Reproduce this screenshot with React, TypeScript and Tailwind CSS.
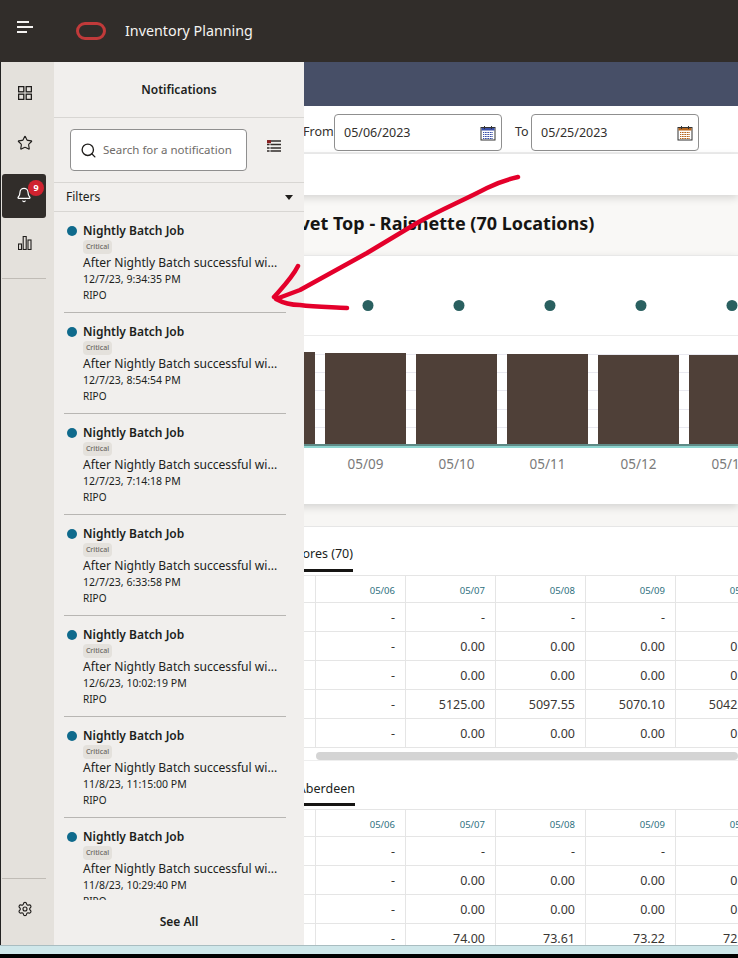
import { Search, Star, Bell, Settings } from "lucide-react";

const FONT = "[font-family:'Noto_Sans','Open_Sans',sans-serif]";

const NOTIFICATIONS = [
  "12/7/23, 9:34:35 PM",
  "12/7/23, 8:54:54 PM",
  "12/7/23, 7:14:18 PM",
  "12/7/23, 6:33:58 PM",
  "12/6/23, 10:02:19 PM",
  "11/8/23, 11:15:00 PM",
  "11/8/23, 10:29:40 PM",
];

const DATES = ["05/06", "05/07", "05/08", "05/09", "05/10", "05/11"];

const STORE_ROWS = [
  ["-", "-", "-", "-", "-", "-"],
  ["-", "0.00", "0.00", "0.00", "0.00", "0.00"],
  ["-", "0.00", "0.00", "0.00", "0.00", "0.00"],
  ["-", "5125.00", "5097.55", "5070.10", "5042.65", "5015.20"],
  ["-", "0.00", "0.00", "0.00", "0.00", "0.00"],
];

const ABERDEEN_ROWS = [
  ["-", "-", "-", "-", "-", "-"],
  ["-", "0.00", "0.00", "0.00", "0.00", "0.00"],
  ["-", "0.00", "0.00", "0.00", "0.00", "0.00"],
  ["-", "74.00", "73.61", "73.22", "72.83", "72.44"],
  ["-", "0.00", "0.00", "0.00", "0.00", "0.00"],
];

const BARS = [
  { x: -2, top: 96 },
  { x: 89, top: 96 },
  { x: 180, top: 97 },
  { x: 271, top: 98 },
  { x: 362, top: 98 },
  { x: 453, top: 99 },
  { x: 544, top: 99 },
  { x: 635, top: 99 },
];

function CalendarIcon({ color, fill }: { color: string; fill: string }) {
  return (
    <svg width="16" height="16" viewBox="0 0 16 16" className="shrink-0">
      <rect x="1" y="2.5" width="14" height="12.5" fill="#fff" stroke="#333" strokeWidth="1" />
      <rect x="1.5" y="3" width="13" height="2.5" fill={color} />
      <path d="M4.5 1v3M11.5 1v3" stroke="#333" strokeWidth="1" />
      <path d="M3 7.5h10M3 9.5h10M3 11.5h10M3 13.5h10" stroke={fill} strokeWidth="1" />
      <path d="M4.5 7v7M7 7v7M9.5 7v7M12 7v7" stroke="#fff" strokeWidth="0.7" />
    </svg>
  );
}

function DateField({ value, color, fill }: { value: string; color: string; fill: string }) {
  return (
    <div className="flex h-[37px] w-[168px] items-center justify-between rounded border border-[#8f8f8f] bg-white pl-[9px] pr-[5px] text-[12.5px] text-[#33302d]">
      <span className="mt-px">{value}</span>
      <CalendarIcon color={color} fill={fill} />
    </div>
  );
}

function DataTable({ rows }: { rows: string[][] }) {
  return (
    <div className="w-[800px] border-t border-[#e5e5e5]">
      <div className="flex h-[27px] border-b border-[#e5e5e5]">
        <div className="w-[262px] shrink-0 border-r border-[#e5e5e5]" />
        {DATES.map((d) => (
          <div
            key={d}
            className="flex w-[90px] shrink-0 items-center justify-end border-r border-[#e5e5e5] pr-[10px] pt-1 text-[9.5px] text-[#2e7080]"
          >
            {d}
          </div>
        ))}
      </div>
      {rows.map((row, i) => (
        <div key={i} className="flex h-[29px] border-b border-[#e5e5e5]">
          <div className="w-[262px] shrink-0 border-r border-[#e5e5e5]" />
          {row.map((v, j) => (
            <div
              key={j}
              className="flex w-[90px] shrink-0 items-center justify-end border-r border-[#e5e5e5] pr-[10px] pt-[2px] text-[12.5px] text-[#3a3734]"
            >
              {v}
            </div>
          ))}
        </div>
      ))}
    </div>
  );
}

function NotificationItem({ date }: { date: string }) {
  return (
    <div className="ml-[10px] mr-[18px] h-[101px] shrink-0 border-b border-[#b8b6b3] pt-[11px] text-[#201e1c]">
      <div className="flex h-[16px] items-center">
        <span className="ml-[3px] h-[10px] w-[10px] rounded-full bg-[#0f6a8c]" />
        <span className="ml-[6px] text-[12px] font-semibold leading-4">Nightly Batch Job</span>
      </div>
      <div className="ml-[19px] mt-px flex h-[14px] w-[29px] items-center justify-center rounded-sm bg-[#e4e1dc] text-[7px] font-medium text-[#6a6763]">
        Critical
      </div>
      <div className="ml-[19px] mt-px h-4 whitespace-nowrap text-[12.1px] leading-4">
        After Nightly Batch successful wi...
      </div>
      <div className="ml-[19px] h-4 text-[10.5px] leading-4">{date}</div>
      <div className="ml-[19px] h-4 text-[10px] leading-4">RIPO</div>
    </div>
  );
}

export default function App() {
  return (
    <div className={`relative flex h-[958px] w-[738px] flex-col overflow-hidden bg-black ${FONT}`}>
      {/* Top bar */}
      <header className="flex h-[62px] shrink-0 items-center bg-[#312d2a] text-white">
        <svg width="16" height="12" viewBox="0 0 16 12" className="ml-[17px] -mt-[8px]">
          <path d="M0 1h12M0 6h16M0 11h10" stroke="#f4f2f0" strokeWidth="1.8" />
        </svg>
        <svg width="30" height="18" viewBox="0 0 30 18" className="ml-[43px]">
          <rect x="1.5" y="1.5" width="27" height="15" rx="7.5" fill="none" stroke="#c13a3a" strokeWidth="3" />
        </svg>
        <span className="ml-[19px] text-[14.3px] text-[#f5f4f2]">Inventory Planning</span>
      </header>

      <div className="relative flex h-[883px] shrink-0">
        {/* Icon rail */}
        <nav className="flex w-[54px] shrink-0 flex-col border-l border-[#222] bg-[#e4e1dc] text-[#201e1c]">
          <div className="flex h-[62px] items-center justify-center pr-[6px]">
            <svg width="14" height="14" viewBox="0 0 14 14" fill="none" stroke="#201e1c" strokeWidth="1.3">
              <rect x="0.6" y="0.6" width="5.2" height="5.2" />
              <rect x="8.2" y="0.6" width="5.2" height="5.2" />
              <rect x="0.6" y="8.2" width="5.2" height="5.2" />
              <rect x="8.2" y="8.2" width="5.2" height="5.2" />
            </svg>
          </div>
          <div className="-mt-[6px] flex h-[50px] items-center justify-center pr-[6px]">
            <Star size={16} strokeWidth={1.7} />
          </div>
          <div className="relative mx-px mt-[6px] flex h-[44px] w-[44px] items-center justify-center rounded-[3px] bg-[#312d2a] text-white">
            <Bell size={16} strokeWidth={1.8} className="-mt-[3px]" />
            <span className="absolute left-[26px] top-[6px] flex h-[16px] w-[16px] items-center justify-center rounded-full bg-[#d0222f] text-[9px] font-bold text-white">
              9
            </span>
          </div>
          <div className="flex h-[50px] items-center justify-center pr-[6px]">
            <svg width="14" height="14" viewBox="0 0 14 14" fill="none" stroke="#201e1c" strokeWidth="1.1">
              <rect x="0.5" y="8" width="3" height="5.5" />
              <rect x="5.2" y="0.5" width="3" height="13" />
              <rect x="10" y="4" width="3" height="9.5" />
            </svg>
          </div>
          <div className="mx-px mt-[10px] w-[44px] border-t border-[#c0bcb6]" />
          <div className="flex-1" />
          <div className="mx-px w-[44px] border-t border-[#c0bcb6]" />
          <div className="flex h-[66px] items-center justify-center pb-[6px] pr-[6px]">
            <Settings size={16} strokeWidth={1.7} />
          </div>
        </nav>

        {/* Page content, mostly covered by the notifications drawer */}
        <main className="min-w-0 flex-1 overflow-hidden bg-white">
          <div className="h-[44px] bg-[#474f67]" />
          <div className="flex h-[48px] items-start border-b-2 border-[#eeeeee] pl-[249px] pt-[8px] text-[12.5px] text-[#33302d]">
            <span className="w-[31px] pt-[9px]">From</span>
            <DateField value="05/06/2023" color="#3a4fa8" fill="#3a4fa8" />
            <span className="ml-[13px] w-[16px] pt-[9px]">To</span>
            <DateField value="05/25/2023" color="#b5651d" fill="#b5651d" />
          </div>
          <div className="relative z-10 h-[41px] bg-white shadow-[0_3px_8px_rgba(0,0,0,0.14)]" />
          <div className="flex h-[60px] items-center whitespace-nowrap bg-[#f9f8f6] pb-[3px] pl-[218px] text-[18px] font-bold text-[#161513]">
            Velvet Top - Raisnette (70 Locations)
          </div>

          <section className="relative z-10 h-[249px] border-t border-[#e8e8e8] bg-white shadow-[0_3px_8px_rgba(0,0,0,0.14)]">
            <svg width="684" height="193" viewBox="0 0 684 193" className="block">
              <line x1="0" x2="684" y1="79.5" y2="79.5" stroke="#ebebeb" />
              {[98.5, 116.5, 134.5, 153.5, 171.5].map((y) => (
                <line key={y} x1="0" x2="684" y1={y} y2={y} stroke="#e9e9f0" />
              ))}
              {[-2, 89, 180, 271, 362, 453, 544, 635].map((x) => (
                <circle key={x} cx={x + 134} cy="49.5" r="5.5" fill="#2a6060" />
              ))}
              {BARS.map((b) => (
                <rect key={b.x} x={b.x + 91} y={b.top} width="81" height={188 - b.top} fill="#4f4038" />
              ))}
              <rect x="0" y="188" width="684" height="2" fill="#5f8a86" />
              <rect x="0" y="190" width="684" height="2" fill="#8fd6d0" />
            </svg>
            <div className="flex pl-[266px] pt-[5px] text-[13.5px] leading-5 text-[#7a7a7a]">
              {["05/09", "05/10", "05/11", "05/12", "05/13"].map((d) => (
                <span key={d} className="w-[91px] shrink-0 text-center">
                  {d}
                </span>
              ))}
            </div>
          </section>

          <div className="h-[23px] border-b border-[#e6e6e6] bg-[#f7f6f4]" />

          <div className="flex h-[45px] items-end pl-[150px]">
            <div className="flex h-[42px] w-[149px] justify-end border-b-[3px] border-[#161513] pt-[14px] text-[12.5px] leading-5 text-[#201e1c]">
              Stores (70)
            </div>
          </div>
          <div className="mt-[3px]">
            <DataTable rows={STORE_ROWS} />
          </div>
          <div className="flex h-[13px] items-end border-b border-[#eeeeee] pl-[262px]">
            <div className="h-[8px] w-[476px] rounded-sm bg-[#d4d4d4]" />
          </div>

          <div className="flex h-[45px] items-end pl-[150px]">
            <div className="flex h-[40px] w-[151px] justify-end border-b-[3px] border-[#161513] pt-[13px] text-[12.5px] leading-5 text-[#201e1c]">
              Aberdeen
            </div>
          </div>
          <div className="mt-[3px]">
            <DataTable rows={ABERDEEN_ROWS} />
          </div>
        </main>

        {/* Notifications drawer */}
        <aside className="absolute bottom-0 left-[54px] top-0 z-20 flex w-[250px] flex-col bg-[#f1efed] text-[#201e1c]">
          <div className="flex h-[56px] shrink-0 items-center justify-center border-b border-[#d8d6d3] text-[12px] font-semibold">
            Notifications
          </div>
          <div className="flex h-[65px] shrink-0 items-center border-b border-[#d8d6d3] pl-[16px]">
            <div className="flex h-[42px] w-[177px] items-center rounded border border-[#8f8f8f] bg-white pl-[9px]">
              <Search size={17} strokeWidth={1.9} className="text-[#201e1c]" />
              <span className="ml-[6px] whitespace-nowrap text-[11.5px] text-[#6f6c69]">Search for a notification</span>
            </div>
            <svg width="14" height="12" viewBox="0 0 14 12" className="-mt-[8px] ml-[20px]">
              <path d="M0 1h14M0 4.5h14M0 8h14M0 11h14" stroke="#312d2a" strokeWidth="1.6" />
              <path d="M3 3v9" stroke="#fff" strokeWidth="0.8" />
              <path d="M0 .2h4v3H0z" fill="#8a1f1f" />
            </svg>
          </div>
          <div className="flex h-[29px] shrink-0 items-center justify-between border-b border-[#d8d6d3] pl-[12px] pr-[11px] text-[12px]">
            <span>Filters</span>
            <span className="h-0 w-0 border-x-[4.5px] border-t-[5px] border-x-transparent border-t-[#201e1c]" />
          </div>
          <div className="flex h-[688px] shrink-0 flex-col overflow-hidden">
            {NOTIFICATIONS.map((date, i) => (
              <NotificationItem key={i} date={date} />
            ))}
          </div>
          <div className="flex flex-1 items-center justify-center pb-[2px] text-[12px] font-semibold">See All</div>
        </aside>
      </div>

      <div className="h-[9px] shrink-0 border-t border-[#a9bdc1] bg-[#cfe7ea]" />

      {/* Red hand-drawn arrow on the screenshot */}
      <svg className="pointer-events-none absolute inset-0 z-30" width="738" height="958" viewBox="0 0 738 958" fill="none">
        <path
          d="M518 177C505 180 495 184 487 188C460 202 440 210 417 223L367 253L300 290L276 299C285 304 292 305 300 305C315 307 330 307 347 308M298 266C292 278 282 288 274 297"
          stroke="#e4002b"
          strokeWidth="4.5"
          strokeLinecap="round"
          strokeLinejoin="round"
        />
      </svg>
    </div>
  );
}
